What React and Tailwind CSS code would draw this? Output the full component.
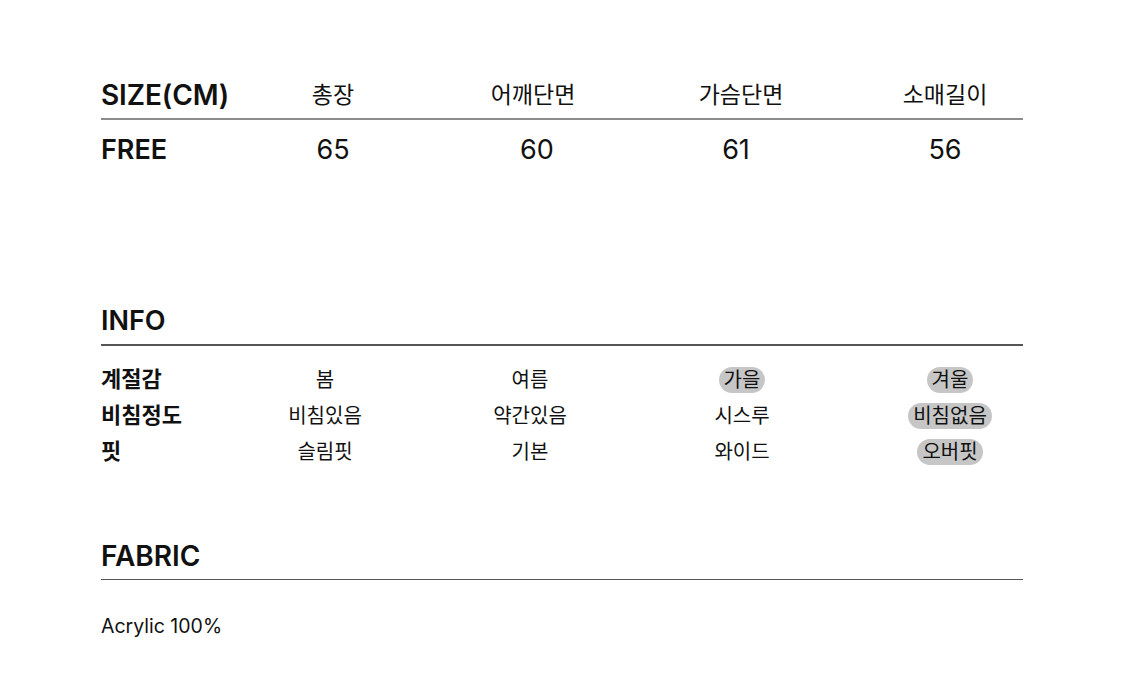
const font = { fontFamily: "Inter, 'Noto Sans CJK KR', sans-serif" };

const sizeHeaders = ['총장', '어깨단면', '가슴단면', '소매길이'];
const sizeValues = ['65', '60', '61', '56'];

const infoRows = [
  { label: '계절감', items: ['봄', '여름', '가을', '겨울'], on: [2, 3] },
  { label: '비침정도', items: ['비침있음', '약간있음', '시스루', '비침없음'], on: [3] },
  { label: '핏', items: ['슬림핏', '기본', '와이드', '오버핏'], on: [3] },
];

const Pill = ({ active, children }) => (
  <span className={`inline-block leading-[26px] px-[5px] rounded-full ${active ? 'bg-[#c6c6c6]' : ''}`}>
    {children}
  </span>
);

const App = () => {
  return (
    <div className="w-[1125px] h-[698px] bg-white text-[#111]" style={font}>
      <div className="w-[922px] ml-[101px] pt-[74px]">
        {/* size table */}
        <div className="grid grid-cols-[130px_204px_204px_204px_204px] items-center h-[38px]">
          <div className="text-[28px] font-semibold tracking-[-0.1px] whitespace-nowrap">SIZE(CM)</div>
          {sizeHeaders.map((h, i) => (
            <div key={h} className={`text-[23px] text-center ${i === 1 ? '-ml-[8px]' : ''}`}>{h}</div>
          ))}
        </div>
        <div className="mt-[6px] h-[2px] bg-[#8c8c8c]"></div>
        <div className="grid grid-cols-[130px_204px_204px_204px_204px] items-center h-[60px]">
          <div className="text-[27px] font-semibold">FREE</div>
          {sizeValues.map((v, i) => (
            <div key={v} className={`text-[27px] text-center ${i === 2 ? '-ml-[10px]' : ''}`}>{v}</div>
          ))}
        </div>

        {/* info */}
        <div className="mt-[123px] text-[27px] font-semibold h-[36px] flex items-center">INFO</div>
        <div className="mt-[5px] h-[1.5px] bg-[#555]"></div>
        <div className="pt-[16px]">
          {infoRows.map((row) => (
            <div key={row.label} className="grid grid-cols-[121px_206px_204px_220px_196px] items-center h-[36px]">
              <div className="text-[22px] font-bold">{row.label}</div>
              {row.items.map((it, i) => (
                <div key={it} className="text-[20px] text-center">
                  <Pill active={row.on.includes(i)}>{it}</Pill>
                </div>
              ))}
            </div>
          ))}
        </div>

        {/* fabric */}
        <div className="mt-[68px] text-[28px] font-semibold h-[36px] flex items-center">FABRIC</div>
        <div className="mt-[5px] h-[1.5px] bg-[#555]"></div>
        <div className="mt-[32px] text-[19.5px]">Acrylic 100%</div>
      </div>
    </div>
  );
};

export default App;
